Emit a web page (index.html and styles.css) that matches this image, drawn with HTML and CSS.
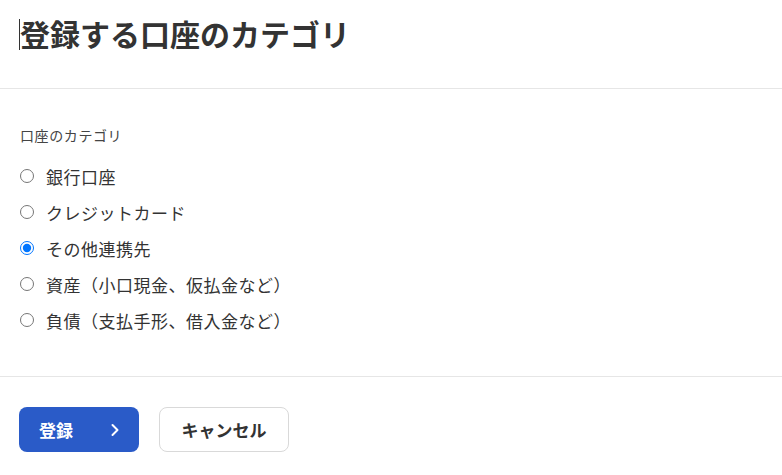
FILE: index.html
```html
<!DOCTYPE html>
<html lang="ja">
  <head>
    <meta charset="UTF-8" />
    <meta name="viewport" content="width=device-width, initial-scale=1.0" />
    <title>登録する口座のカテゴリ</title>
    <link rel="stylesheet" href="styles.css">
  </head>
  <body>
    <div class="modal">
      <div class="modal-header">
        <h1 class="modal-title"><span class="caret"></span>登録する口座のカテゴリ</h1>
      </div>
      <div class="modal-body">
        <div class="field-label">口座のカテゴリ</div>
        <label class="radio-row">
          <input type="radio" name="category" value="bank" />
          <span>銀行口座</span>
        </label>
        <label class="radio-row">
          <input type="radio" name="category" value="card" />
          <span>クレジットカード</span>
        </label>
        <label class="radio-row">
          <input type="radio" name="category" value="other" checked />
          <span>その他連携先</span>
        </label>
        <label class="radio-row">
          <input type="radio" name="category" value="asset" />
          <span>資産（小口現金、仮払金など）</span>
        </label>
        <label class="radio-row">
          <input type="radio" name="category" value="debt" />
          <span>負債（支払手形、借入金など）</span>
        </label>
      </div>
      <div class="modal-footer">
        <button class="button button-primary">
          <span>登録</span>
          <svg class="chevron" width="10" height="14" viewBox="0 0 10 14">
            <path d="M2.5 2 L7.5 7 L2.5 12" fill="none" stroke="#fff" stroke-width="2" stroke-linecap="round" stroke-linejoin="round" />
          </svg>
        </button>
        <button class="button button-secondary">キャンセル</button>
      </div>
    </div>
  </body>
</html>
```

FILE: styles.css
```css
* {
  box-sizing: border-box;
}
body {
  margin: 0;
  padding: 0;
  background-color: #fff;
  color: #333;
  font-family: "Noto Sans CJK JP", "Noto Sans", sans-serif;
}
.modal {
  width: 100%;
}
.modal-header {
  padding: 13px 20px 35px;
  border-bottom: 1px solid #e6e6e6;
}
.modal-title {
  margin: 0;
  font-size: 30px;
  line-height: 40px;
  font-weight: 700;
  color: #333;
  position: relative;
}
.caret {
  position: absolute;
  left: -1px;
  top: 6px;
  width: 1px;
  height: 31px;
  background-color: #333;
}
.modal-body {
  padding: 36px 20px 38px;
  border-bottom: 1px solid #e6e6e6;
}
.field-label {
  font-size: 14px;
  line-height: 20px;
  letter-spacing: 0.6px;
  color: #444;
  margin-bottom: 13px;
}
.radio-row {
  display: flex;
  align-items: center;
  height: 36px;
  font-size: 17px;
  letter-spacing: 0.5px;
  color: #333;
  cursor: pointer;
}
.radio-row input {
  margin: 0 12px 0 0;
  width: 14px;
  height: 14px;
}
.modal-footer {
  display: flex;
  gap: 20px;
  padding: 30px 19px 24px;
}
.button {
  height: 45px;
  border-radius: 8px;
  font-family: inherit;
  font-size: 17px;
  font-weight: 700;
  cursor: pointer;
}
.button-primary {
  width: 120px;
  display: flex;
  align-items: center;
  justify-content: space-between;
  padding: 0 19px 0 20px;
  background-color: #2a5bc8;
  color: #fff;
  border: none;
}
.button-secondary {
  width: 130px;
  background-color: #fff;
  color: #333;
  border: 1px solid #d9d9d9;
}
```
